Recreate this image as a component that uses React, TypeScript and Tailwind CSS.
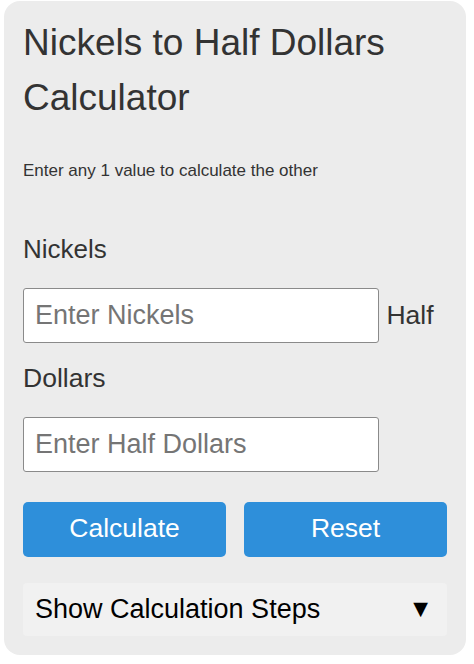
import React from "react";

const font = { fontFamily: '"Liberation Sans", Arial, sans-serif' };

export default function App() {
  return (
    <div className="min-h-[664px] bg-white" style={font}>
      <div className="ml-[4px] mt-px w-[462px] rounded-[16px] bg-[#ececec] px-[19px] pt-[14px] pb-[19px] text-[#333]">
        <h1 className="text-[37px] leading-[55px] font-normal">
          Nickels to Half Dollars Calculator
        </h1>
        <p className="mt-[33px] text-[17px] leading-[25.5px]">
          Enter any 1 value to calculate the other
        </p>

        <label className="mt-[47px] block text-[26px] leading-[37.5px]">Nickels</label>
        <div className="mt-[20px] text-[26.5px] leading-[37.5px]">
          <input
            type="number"
            placeholder="Enter Nickels"
            className="mb-[17px] box-border inline-block h-[55px] w-[356px] rounded-[3px] border border-[#8a8a8a] bg-white px-[11px] align-baseline text-[27px] text-[#333] placeholder:text-[#757575] outline-none"
          />{" "}
          <label>Half Dollars</label>
        </div>
        <div className="pt-[19px]">
          <input
            type="number"
            placeholder="Enter Half Dollars"
            className="box-border block h-[55px] w-[356px] rounded-[3px] border border-[#8a8a8a] bg-white px-[11px] text-[27px] text-[#333] placeholder:text-[#757575] outline-none"
          />
        </div>

        <div className="mt-[30px] flex gap-[18px]">
          <button className="h-[55px] flex-1 rounded-[5px] bg-[#2e8fda] text-[26.5px] text-white">
            Calculate
          </button>
          <button className="h-[55px] flex-1 rounded-[5px] bg-[#2e8fda] text-[26.5px] text-white">
            Reset
          </button>
        </div>

        <div className="mt-[26px] flex h-[53px] items-center justify-between rounded-[4px] bg-[#f1f1f1] pl-[12px] pr-[14px] text-[27px] text-black">
          <span>Show Calculation Steps</span>
          <span className="text-[25px]">▼</span>
        </div>
      </div>
    </div>
  );
}
